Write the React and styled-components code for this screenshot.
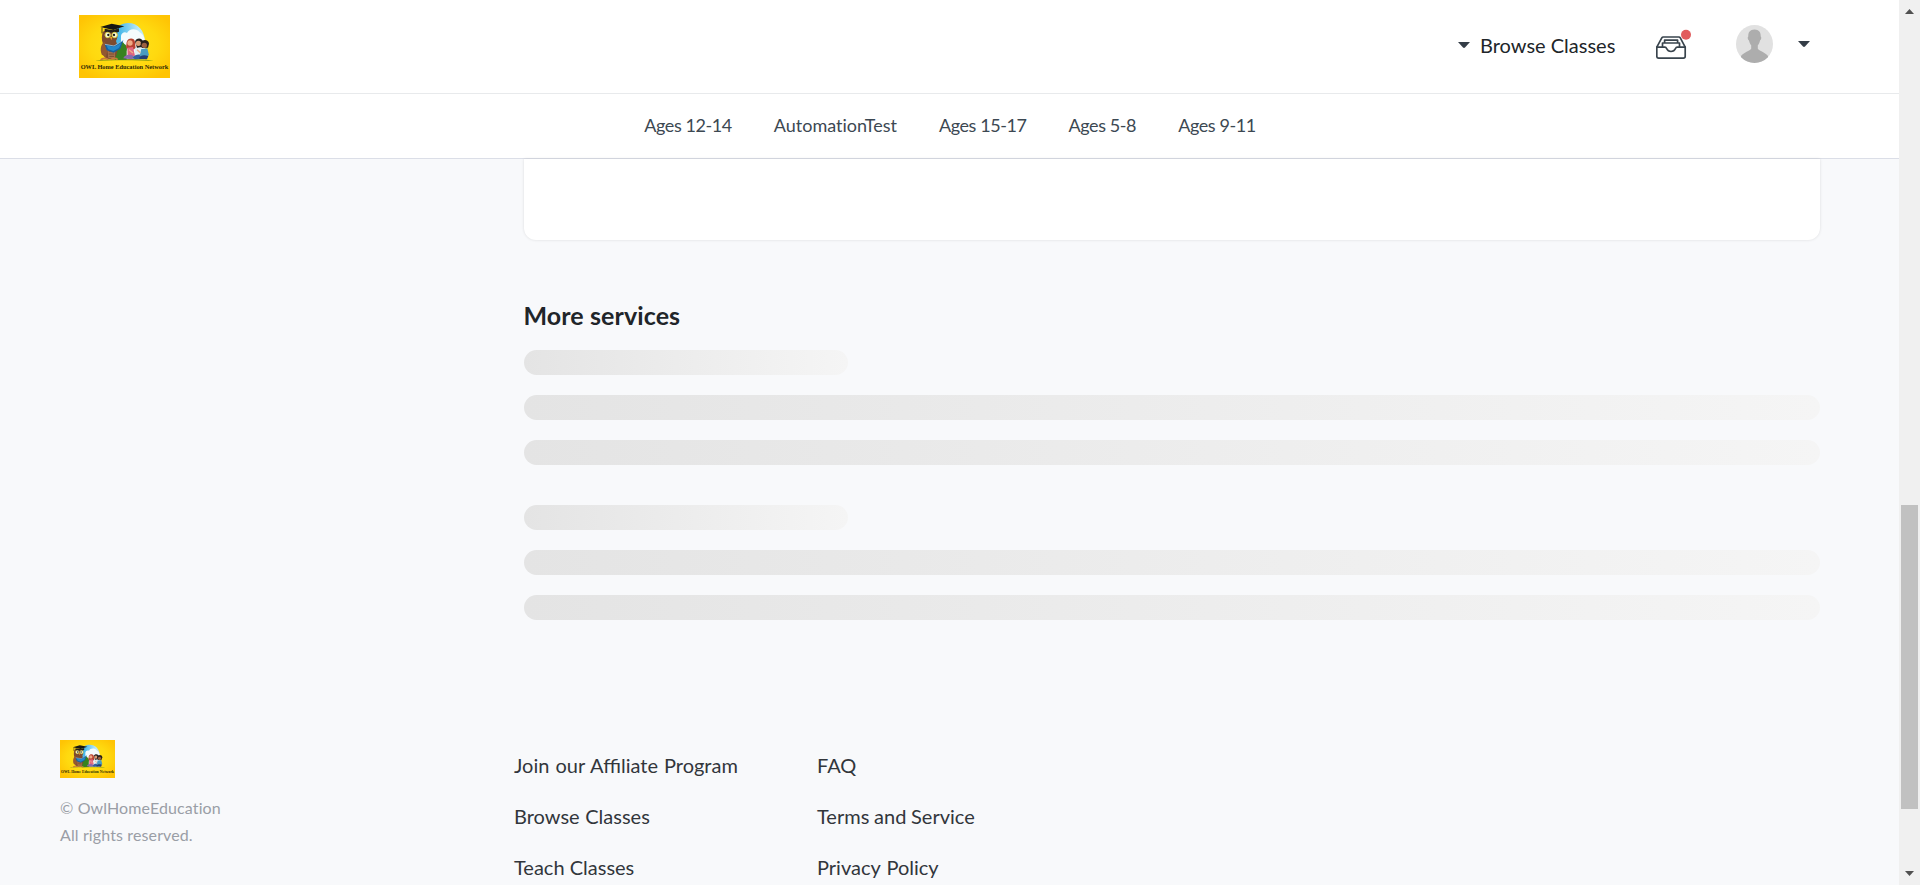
import React from "react";
import styled, { createGlobalStyle } from "styled-components";

const GlobalStyle = createGlobalStyle`
  *, *::before, *::after { box-sizing: border-box; }
  html, body { margin: 0; padding: 0; overflow: hidden; }
  body {
    background: #f8f9fb;
    color: #212529;
    font-family: Lato, "Liberation Sans", sans-serif;
  }
`;

const Shell = styled.div`
  display: grid;
  grid-template-columns: minmax(0, 1fr) 21px;
  height: 885px;
  overflow: hidden;
`;

const Page = styled.div`
  display: flex;
  flex-direction: column;
  height: 885px;
  overflow: hidden;
`;

const Header = styled.header`
  display: flex;
  flex: none;
  justify-content: space-between;
  align-items: flex-start;
  height: 94px;
  padding: 15px 89px 0 79px;
  background: #fff;
  border-bottom: 1px solid #e8eaec;
`;

const Logo = styled.svg`
  display: block;
  flex: none;
  width: ${(p) => p.$w}px;
  height: ${(p) => p.$h}px;
  overflow: visible;
`;

const Actions = styled.div`
  display: flex;
  align-items: flex-start;
`;

const Caret = styled.svg`
  display: block;
  width: 12px;
  height: 6px;
`;

const BrowseLink = styled.a`
  display: flex;
  gap: 10px;
  width: 182px;
  color: #212529;
  font-size: 20px;
  line-height: 30px;
  padding-top: 15px;
  white-space: nowrap;
`;

const BrowseCaret = styled(Caret)`
  margin-top: 12px;
`;

const InboxButton = styled.div`
  width: 36px;
  height: 30px;
  margin: 14px 0 0 16px;
`;

const Avatar = styled.svg`
  display: block;
  width: 37px;
  height: 38px;
  margin: 10px 0 0 44px;
`;

const MenuCaret = styled(Caret)`
  margin: 26px 0 0 25px;
`;

const CategoryNav = styled.nav`
  display: flex;
  flex: none;
  justify-content: center;
  gap: 42px;
  height: 65px;
  padding-left: 1px;
  background: #fff;
  border-bottom: 1px solid #dbdee7;
`;

const CategoryLink = styled.a`
  color: #3c4852;
  font-size: 18px;
  line-height: 63px;
  letter-spacing: ${(p) => p.$tracking}px;
  font-variant-ligatures: none;
  white-space: nowrap;
`;

const Main = styled.main`
  flex: none;
  width: 1296px;
  margin-left: 524px;
`;

const Card = styled.section`
  height: 81px;
  background: #fff;
  border-radius: 0 0 12px 12px;
  box-shadow: 0 0 3px rgba(0, 0, 0, 0.12);
`;

const Title = styled.h2`
  margin: 57px 0 0 -0.5px;
  font-size: 25px;
  font-weight: 700;
  line-height: 36px;
  letter-spacing: 0.1px;
`;

const SkeletonGroup = styled.div`
  display: flex;
  flex-direction: column;
  gap: 20px;
  margin-top: ${(p) => p.$top}px;
`;

const SkeletonBar = styled.div`
  width: ${(p) => (p.$short ? "25%" : "100%")};
  height: 25px;
  border-radius: 12.5px;
  background: linear-gradient(90deg, #e4e4e4, #f5f5f5);
`;

const Footer = styled.footer`
  display: grid;
  flex: none;
  grid-template-columns: 454px 303px 303px;
  margin-top: 120px;
  padding-left: 60px;
`;

const Copyright = styled.p`
  margin: 16px 0 0;
  color: #9a9ea6;
  font-size: 16px;
  line-height: 27px;
  letter-spacing: 0.12px;
`;

const LinkColumn = styled.div`
  display: flex;
  flex-direction: column;
`;

const FooterLink = styled.a`
  color: #32363b;
  font-size: 20px;
  line-height: 51px;
  word-spacing: ${(p) => p.$wordGap || 0}px;
  white-space: nowrap;
`;

const ScrollTrack = styled.div`
  display: flex;
  flex-direction: column;
  align-items: center;
  height: 885px;
  padding: 9px 0;
  background: #f0f0f0;
`;

const ScrollThumb = styled.div`
  width: 17px;
  height: 304px;
  margin: 491px 0 auto;
  background: #c1c1c1;
`;

const ScrollArrow = styled.svg`
  display: block;
  width: 9px;
  height: 5px;
`;

function OwlLogo({ w, h }) {
  const id = `glow${w}`;
  return (
    <Logo $w={w} $h={h} viewBox="0 0 273 189" preserveAspectRatio="none">
      <defs>
        <radialGradient id={id} cx="50%" cy="48%" r="62%">
          <stop offset="0" stopColor="#ffe51f" />
          <stop offset="0.6" stopColor="#ffd90f" />
          <stop offset="1" stopColor="#ffc404" />
        </radialGradient>
        <linearGradient id={`${id}sky`}>
          <stop offset="0.2" stopColor="#49b9ea" />
          <stop offset="0.8" stopColor="#bfe9f7" />
        </linearGradient>
      </defs>
      <rect width="273" height="189" fill={`url(#${id})`} />
      <path d="M104 56C112 34 128 24 147 24c30 0 49 23 51 55v54h-94z" fill={`url(#${id}sky)`} />
      <path d="M126 62c2-10 12-13 18-8 6-15 30-15 38-2 8 3 14 12 16 27v44h-72z" fill="#f4fbfd" />
      <path d="M48 138c34-7 138-8 176 0-50-3-126-3-176 0z" fill="#8a9c10" />
      <path d="M108 135c-3-18 0-36 8-42 2-14 14-17 20-6 8 4 9 14 7 22v25z" fill="#38821f" />
      {/* owl */}
      <path d="M72 50c10-8 35-8 42 0 3 10 2 20-3 28 7 18 6 40-5 54H85c-13-6-17-28-13-46-5-12-4-26 0-36z" fill="#7d4c30" />
      <path d="M76 80c-10 6-14 24-8 38l12 10 7-28z" fill="#935830" />
      <path d="M85 96h25l-3 34H88z" fill="#a87550" />
      <path d="M89 110h18M89 117h17M91 124h14" stroke="#704026" strokeWidth="2.500" />
      <path d="M64 36l34-10 38 8-33 11z" fill="#171713" />
      <path d="M77 41l24 5 19-6v10c-12 4-30 3-43 0z" fill="#22201a" />
      <path d="M69 38v17" stroke="#26231b" strokeWidth="2.500" />
      <circle cx="86" cy="60" r="8" fill="#fbfbe4" stroke="#d9cf45" strokeWidth="3" />
      <circle cx="107" cy="60" r="8" fill="#fbfbe4" stroke="#d9cf45" strokeWidth="3" />
      <circle cx="88" cy="60" r="3.500" fill="#171d19" />
      <circle cx="105" cy="60" r="3.500" fill="#171d19" />
      <path d="M93 66h7l-3 10z" fill="#f0a51d" />
      <path d="M77 88l28 4 28-16-9 25-20 12-21-7z" fill="#155f9f" />
      <path d="M82 91l22 5 23-12-7 15-17 9-15-5z" fill="#2288cb" />
      <path d="M78 88l27 5 28-17" fill="none" stroke="#bddff0" strokeWidth="2" />
      <path d="M65 135c5-6 17-7 23-1M96 134c5-5 15-5 20 0" stroke="#c77b3a" strokeWidth="5" fill="none" />
      {/* children */}
      <path d="M143 81c4-14 24-13 25 0l2 20-15 5-14-8z" fill="#b8412f" />
      <circle cx="153" cy="84" r="8" fill="#f0aa85" />
      <path d="M145 98l17-2 6 26-22 6z" fill="#e0667f" />
      <path d="M133 130c2-10 15-13 27-10l6 10-9 3z" fill="#8c69a8" />
      <path d="M168 80c3-13 22-13 25 1l1 16-20 2z" fill="#25221f" />
      <circle cx="178" cy="85" r="8" fill="#d89b73" />
      <path d="M167 100l20-3 7 24-25 5z" fill="#dfeef0" />
      <path d="M161 129c6-11 18-12 29-9l-2 12-20 1z" fill="#33609d" />
      <path d="M185 86c2-15 24-15 25 0l-3 12-18 1z" fill="#29201b" />
      <circle cx="196" cy="91" r="8" fill="#9c6040" />
      <path d="M187 102l18-2 5 21-18 8-10-6z" fill="#4a9bc2" />
      <path d="M180 130c3-9 14-12 28-7l-4 10-20-1z" fill="#263e76" />
      <path d="M150 104l12 10M174 104l10 9" stroke="#f0ae85" strokeWidth="4" />
      <text x="5" y="162" textLength="263" lengthAdjust="spacingAndGlyphs" fill="#2f2906" fontFamily="Liberation Serif, serif" fontWeight="700" fontSize="19">OWL Home Education Network</text>
    </Logo>
  );
}

function DownCaret({ as: Component }) {
  return (
    <Component viewBox="0 0 12 6">
      <path d="M0 0h12L7 5.5Q6 6.3 5 5.5z" fill="#343d47" />
    </Component>
  );
}

const categories = [
  { name: "Ages 12-14", tracking: -0.42 },
  { name: "AutomationTest", tracking: -0.01 },
  { name: "Ages 15-17", tracking: -0.42 },
  { name: "Ages 5-8", tracking: -0.4 },
  { name: "Ages 9-11", tracking: -0.42 },
];
const linkColumns = [
  [{ label: "Join our Affiliate Program", wordGap: 0.9 }, { label: "Browse Classes", wordGap: 0.5 }, { label: "Teach Classes" }],
  [{ label: "FAQ" }, { label: "Terms and Service", wordGap: -0.4 }, { label: "Privacy Policy", wordGap: 1 }],
];

export default function App() {
  return (
    <>
      <GlobalStyle />
      <Shell>
        <Page>
          <Header>
            <OwlLogo w={91} h={63} />
            <Actions>
              <BrowseLink>
                <DownCaret as={BrowseCaret} />
                <span>Browse Classes</span>
              </BrowseLink>
              <InboxButton>
                <svg width="36" height="30" viewBox="0 0 36 30">
                  <g fill="none" stroke="#39444d" strokeWidth="1.7" strokeLinejoin="round" strokeLinecap="round">
                    <path d="M.8 18.2h8.1c1 0 1.3.4 1.7 1.3.8 1.8 2.2 3 4.400 3s3.700-1.200 4.500-3c.4-.9.7-1.300 1.700-1.300h8v9.100q0 1.800-1.800 1.800H2.600Q.8 29.100.8 27.300z" />
                    <path d="M.8 18.200l5-9.300q.5-.9 1.500-.9h15.500q1 0 1.500.9l4.900 9.300" />
                    <path d="M6.500 17.500v-3.500h17v3.500M8.600 13.800v-2.600h13v2.600" />
                  </g>
                  <circle cx="30" cy="5.800" r="5" fill="#e15d5e" />
                </svg>
              </InboxButton>
              <Avatar viewBox="0 0 37 38">
                <defs>
                  <clipPath id="avatarClip">
                    <ellipse cx="18.500" cy="19" rx="18.500" ry="19" />
                  </clipPath>
                </defs>
                <g clipPath="url(#avatarClip)">
                  <rect width="37" height="38" fill="#e1e1e1" />
                  <path d="M18.500 4.500c-4.500 0-6.500 3-6.200 7-.9.200-.7 3.200.7 4 .4 2.200 1.300 3.800 2.200 4.800v3.500C14 26 7.500 27.500 5 31v7h27v-7c-2.500-3.500-9-5-10.200-7.200v-3.500c1-1 1.800-2.600 2.200-4.800 1.400-.8 1.600-3.800.7-4 .3-4-1.700-7-6.200-7z" fill="#adadad" />
                </g>
              </Avatar>
              <DownCaret as={MenuCaret} />
            </Actions>
          </Header>
          <CategoryNav>
            {categories.map(({ name, tracking }) => (
              <CategoryLink key={name} $tracking={tracking}>
                {name}
              </CategoryLink>
            ))}
          </CategoryNav>
          <Main>
            <Card />
            <Title>More services</Title>
            <SkeletonGroup $top={17}>
              <SkeletonBar $short />
              <SkeletonBar />
              <SkeletonBar />
            </SkeletonGroup>
            <SkeletonGroup $top={40}>
              <SkeletonBar $short />
              <SkeletonBar />
              <SkeletonBar />
            </SkeletonGroup>
          </Main>
          <Footer>
            <div>
              <OwlLogo w={55} h={38} />
              <Copyright>
                © OwlHomeEducation
                <br />
                All rights reserved.
              </Copyright>
            </div>
            {linkColumns.map((links) => (
              <LinkColumn key={links[0].label}>
                {links.map(({ label, wordGap }) => (
                  <FooterLink key={label} $wordGap={wordGap}>
                    {label}
                  </FooterLink>
                ))}
              </LinkColumn>
            ))}
          </Footer>
        </Page>
        <ScrollTrack>
          <ScrollArrow viewBox="0 0 9 5">
            <path d="M4.500 0L9 5H0z" fill="#505050" />
          </ScrollArrow>
          <ScrollThumb />
          <ScrollArrow viewBox="0 0 9 5">
            <path d="M0 0h9L4.500 5z" fill="#505050" />
          </ScrollArrow>
        </ScrollTrack>
      </Shell>
    </>
  );
}
